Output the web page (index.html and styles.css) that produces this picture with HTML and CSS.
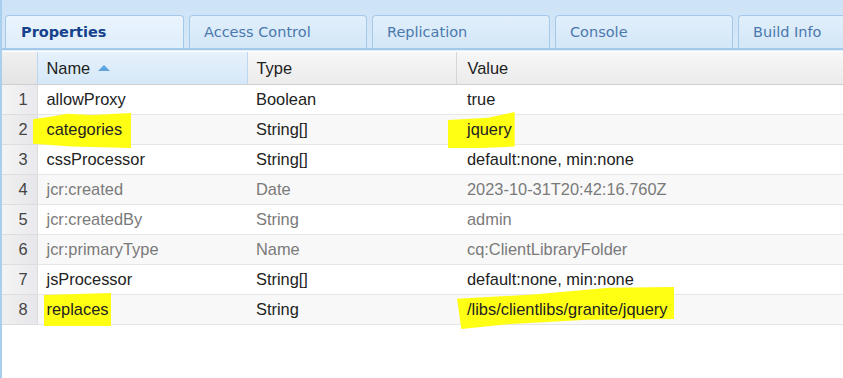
FILE: index.html
```html
<!DOCTYPE html>
<html lang="en">
<head>
    <meta charset="UTF-8">
    <title>CRXDE Properties</title>
    <link rel="stylesheet" href="styles.css">
</head>
<body>
    <div class="panel">
        <div class="tab-bar">
            <div class="tab active">Properties</div>
            <div class="tab">Access Control</div>
            <div class="tab">Replication</div>
            <div class="tab">Console</div>
            <div class="tab">Build Info</div>
        </div>
        <table class="grid">
            <colgroup>
                <col class="col-num">
                <col class="col-name">
                <col class="col-type">
                <col>
            </colgroup>
            <thead>
                <tr>
                    <th class="num"></th>
                    <th class="sorted">Name <span class="sort-arrow"></span></th>
                    <th>Type</th>
                    <th class="value">Value</th>
                </tr>
            </thead>
            <tbody>
                <tr>
                    <td class="num">1</td>
                    <td>allowProxy</td>
                    <td>Boolean</td>
                    <td class="value">true</td>
                </tr>
                <tr>
                    <td class="num">2</td>
                    <td><span class="mark mark-categories">categories</span></td>
                    <td>String[]</td>
                    <td class="value"><span class="mark mark-jquery">jquery</span></td>
                </tr>
                <tr>
                    <td class="num">3</td>
                    <td>cssProcessor</td>
                    <td>String[]</td>
                    <td class="value">default:none, min:none</td>
                </tr>
                <tr class="protected">
                    <td class="num">4</td>
                    <td>jcr:created</td>
                    <td>Date</td>
                    <td class="value">2023-10-31T20:42:16.760Z</td>
                </tr>
                <tr class="protected">
                    <td class="num">5</td>
                    <td>jcr:createdBy</td>
                    <td>String</td>
                    <td class="value">admin</td>
                </tr>
                <tr class="protected">
                    <td class="num">6</td>
                    <td>jcr:primaryType</td>
                    <td>Name</td>
                    <td class="value">cq:ClientLibraryFolder</td>
                </tr>
                <tr>
                    <td class="num">7</td>
                    <td>jsProcessor</td>
                    <td>String[]</td>
                    <td class="value">default:none, min:none</td>
                </tr>
                <tr>
                    <td class="num">8</td>
                    <td><span class="mark mark-replaces">replaces</span></td>
                    <td>String</td>
                    <td class="value"><span class="mark mark-path">/libs/clientlibs/granite/jquery</span></td>
                </tr>
            </tbody>
        </table>
    </div>
</body>
</html>
```

FILE: styles.css
```css
body {
    margin: 0;
    font-family: "Liberation Sans", Arial, sans-serif;
    background-color: #ffffff;
}
.panel {
    height: 378px;
    border-left: 2px solid #a9cfee;
    overflow: hidden;
}
.tab-bar {
    display: flex;
    gap: 5px;
    padding: 15px 0 0 3px;
    height: 33px;
    background: linear-gradient(#cde3f6, #d6e8f8);
    border-bottom: 2px solid #a5c9ea;
    box-shadow: 0 1px 0 #dcecf9;
    white-space: nowrap;
}
.tab {
    flex: 0 0 auto;
    box-sizing: border-box;
    width: 178px;
    padding: 0 6px 0 14px;
    border: 1px solid #a5c9ea;
    border-bottom: none;
    border-radius: 4px 4px 0 0;
    background: linear-gradient(#e1effb, #d3e7f8);
    color: #4a78ad;
    font-family: Tahoma, "DejaVu Sans", sans-serif;
    font-size: 14.5px;
    line-height: 33px;
}
.tab.active {
    width: 179px;
    padding-left: 15px;
    background: linear-gradient(#eaf4fd, #dfeefb);
    color: #15428b;
    font-weight: bold;
}
.grid {
    width: 100%;
    margin-top: 2px;
    border-collapse: collapse;
    table-layout: fixed;
    font-size: 16.4px;
    color: #222222;
}
.col-num {
    width: 35px;
}
.col-name {
    width: 210px;
}
.col-type {
    width: 209px;
}
.grid th {
    height: 32px;
    padding: 0 0 0 9px;
    text-align: left;
    font-weight: normal;
    background: linear-gradient(#f7f7f7, #ebebeb);
    border-left: 1px solid #d6d6d6;
    border-bottom: 1px solid #cfcfcf;
}
.grid th.num {
    border-left: none;
    background: linear-gradient(#f0f0f0, #e4e4e4);
}
.grid th.sorted {
    background: linear-gradient(#e6f1fb, #d5e8f8);
    border-left-color: #bcd7ef;
    border-right: 1px solid #bcd7ef;
}
.grid th.value,
.grid td.value {
    padding-left: 11px;
}
.sort-arrow {
    display: inline-block;
    width: 0;
    height: 0;
    margin-left: 3px;
    vertical-align: 3px;
    border-left: 6px solid transparent;
    border-right: 6px solid transparent;
    border-bottom: 6px solid #5ea3dc;
}
.grid td {
    height: 29px;
    padding: 0 0 0 9px;
    border-bottom: 1px solid #e6e6e6;
    white-space: nowrap;
}
.grid td.num {
    padding: 0 9px 0 0;
    text-align: right;
    color: #444444;
    background: linear-gradient(90deg, #f4f4f4, #e9e9ee);
    border-right: 1px solid #dcdcdc;
    border-bottom-color: #dedede;
}
.grid tbody tr:nth-child(even) td {
    background-color: #f8f8f8;
}
.grid tbody tr:nth-child(even) td.num {
    background: linear-gradient(90deg, #f0f0f0, #e6e6eb);
}
.grid tr.protected td {
    color: #7a7a7a;
}
.grid tr.protected td.num {
    color: #444444;
}
.mark {
    position: relative;
    z-index: 0;
}
.mark::before {
    content: "";
    position: absolute;
    z-index: -1;
    background: #ffff14;
}
.mark-categories::before {
    left: -14px;
    right: -9px;
    top: -7px;
    bottom: -10px;
    clip-path: polygon(0 18%, 20% 10%, 35% 2%, 60% 6%, 100% 0, 100% 100%, 40% 96%, 0 88%);
}
.mark-jquery::before {
    left: -19px;
    right: -3px;
    top: -8px;
    bottom: -10px;
    clip-path: polygon(0 22%, 60% 16%, 100% 0, 100% 96%, 50% 100%, 0 100%);
}
.mark-replaces::before {
    left: -3px;
    right: -3px;
    top: -7px;
    bottom: -8px;
    clip-path: polygon(0 6%, 100% 0, 100% 100%, 0 100%);
}
.mark-path::before {
    left: -10px;
    right: -7px;
    top: -13px;
    bottom: -11px;
    clip-path: polygon(0 28%, 35% 18%, 70% 2%, 100% 0, 100% 76%, 60% 78%, 25% 88%, 2% 100%);
}
```
